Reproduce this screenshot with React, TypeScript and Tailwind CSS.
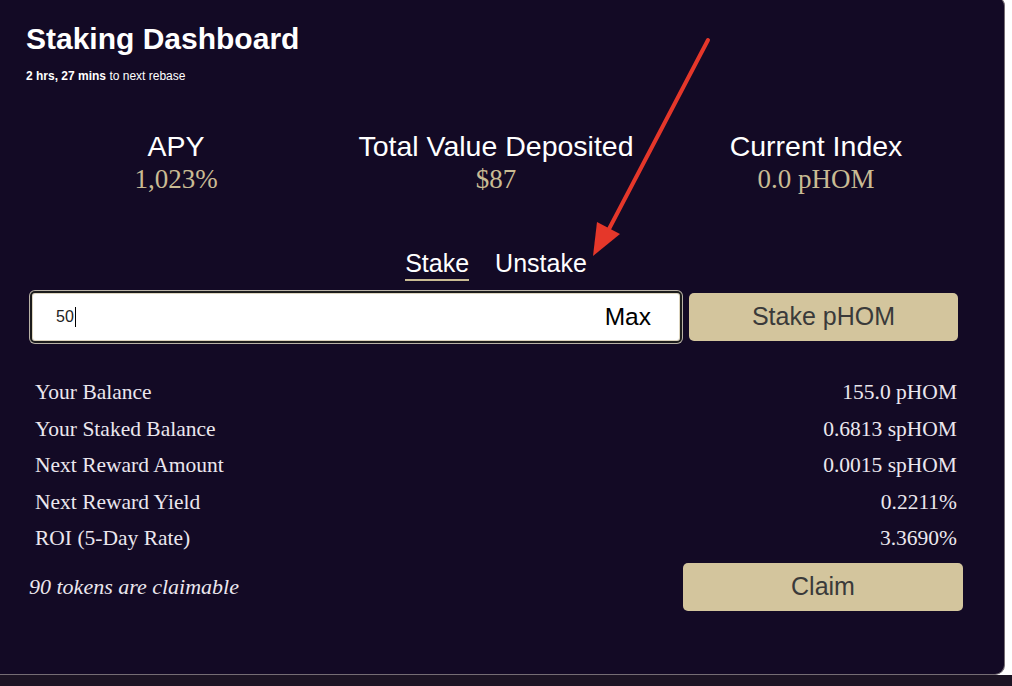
import React from "react";

const rows: [string, string][] = [
  ["Your Balance", "155.0 pHOM"],
  ["Your Staked Balance", "0.6813 spHOM"],
  ["Next Reward Amount", "0.0015 spHOM"],
  ["Next Reward Yield", "0.2211%"],
  ["ROI (5-Day Rate)", "3.3690%"],
];

const stats: [string, string][] = [
  ["APY", "1,023%"],
  ["Total Value Deposited", "$87"],
  ["Current Index", "0.0 pHOM"],
];

export default function App() {
  return (
    <div className="relative w-[1012px] h-[686px] overflow-hidden bg-white font-['Liberation_Sans',Arial,sans-serif]">
      <div className="w-[1005px] h-[679px] -mt-[4px] bg-[#130a25] border-t border-r border-b border-[#756d74] rounded-r-[10px] pl-[16px] pt-[24px]">
        <div className="ml-[10px] text-[30px] leading-[36px] font-bold text-white">Staking Dashboard</div>
        <div className="ml-[10px] mt-[11px] text-[12px] leading-[16px] text-white">
          <span className="font-bold">2 hrs, 27 mins</span> to next rebase
        </div>

        <div className="mt-[46px] grid grid-cols-3 w-[960px]">
          {stats.map(([label, value]) => (
            <div key={label} className="flex flex-col items-center">
              <div className="text-[28.5px] leading-[32px] text-white">{label}</div>
              <div className="mt-[2px] text-[27px] leading-[30px] text-[#c9bb93] font-['Liberation_Serif',serif]">{value}</div>
            </div>
          ))}
        </div>

        <div className="mt-[55px] flex justify-center gap-[26px] w-[960px] text-[25px] leading-[28px] text-white">
          <div className="pb-[2px] border-b-2 border-[#c9bb93]">Stake</div>
          <div className="pb-[2px] border-b-2 border-transparent">Unstake</div>
        </div>

        <div className="mt-[9px] ml-[13px] flex items-center gap-[6px]">
          <div className="w-[654px] h-[54px] p-[1px] rounded-[6px] bg-[#b9b2a6]">
            <div className="w-full h-full rounded-[5px] border-2 border-[#1c1c1c] bg-white shadow-[inset_0_0_0_1px_#ddd5bf] flex items-center justify-between pl-[24px] pr-[29px]">
              <div className="flex items-center text-[16px] text-[#222]">
                50<span className="inline-block w-[1px] h-[20px] bg-black ml-[1px]" />
              </div>
              <div className="text-[24.5px] text-black">Max</div>
            </div>
          </div>
          <div className="w-[269px] h-[48px] rounded-[5px] bg-[#d3c59d] flex items-center justify-center text-[25px] text-[#3a3a3a]">
            Stake pHOM
          </div>
        </div>

        <div className="mt-[30px] ml-[19px] w-[922px] font-['Liberation_Serif',serif] text-[21.5px] text-[#ebe7ee]">
          {rows.map(([l, v]) => (
            <div key={l} className="h-[36.5px] flex items-center justify-between">
              <span>{l}</span>
              <span>{v}</span>
            </div>
          ))}
        </div>

        <div className="mt-[6px] ml-[13px] w-[934px] flex items-center justify-between">
          <div className="font-['Liberation_Serif',serif] italic text-[22px] text-[#ebe7ee]">90 tokens are claimable</div>
          <div className="w-[280px] h-[48px] rounded-[5px] bg-[#d3c59d] flex items-center justify-center text-[25px] text-[#3a3a3a]">
            Claim
          </div>
        </div>
      </div>
      <div className="h-[11px] bg-[#1c1424]" />

      <svg className="absolute left-0 top-0 pointer-events-none" width="1012" height="686" viewBox="0 0 1012 686">
        <line x1="708" y1="40" x2="609" y2="229" stroke="#e5372a" strokeWidth="4" strokeLinecap="round" />
        <polygon points="593,256 597,222 620,234" fill="#e5372a" />
      </svg>
    </div>
  );
}
